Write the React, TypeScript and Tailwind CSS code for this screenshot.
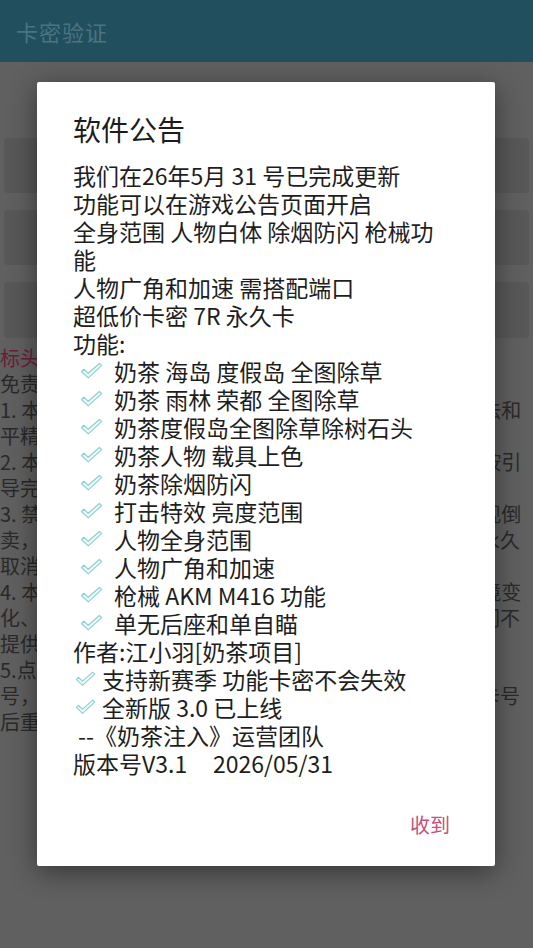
import React from "react";

const FONT = { fontFamily: '"Noto Sans CJK SC", "Noto Sans", sans-serif' };

function Check({ small = false }: { small?: boolean }) {
  return (
    <svg
      viewBox="0 0 24 18"
      className={small ? "w-[21px] h-[16px] shrink-0" : "w-[23px] h-[18px] shrink-0"}
    >
      <path
        d="M1.5 9.5 L4 7.2 L8.6 11.4 L20.2 1.2 L22.6 3.4 L8.6 16.2 Z"
        fill="#eef9f9"
        stroke="#8fd0d2"
        strokeWidth="1.3"
        strokeLinejoin="round"
      />
    </svg>
  );
}

const bgLines: { t: string; red?: boolean }[] = [
  { t: "标头", red: true },
  { t: "免责声明：" },
  { t: "1. 本软件仅供学习与技术交流使用，请勿用于商业、违法和" },
  { t: "平精英等游戏的正常运营。" },
  { t: "2. 本软件需配合端口使用，请在使用前仔细阅读说明并按引" },
  { t: "导完成操作。" },
  { t: "3. 禁止将本软件用于任何形式的二次销售与出租，如发现倒" },
  { t: "卖，我们将立即封禁相关账号与卡密，且不予退款并且永久" },
  { t: "取消使用资格。" },
  { t: "4. 本软件可能会因为游戏版本更新、系统升级或网络环境变" },
  { t: "化、服务器维护等原因而出现功能暂时失效的情况，我们不" },
  { t: "提供任何形式的赔偿。" },
  { t: "5.点击收到后进入验证页面，输入您购买的卡" },
  { t: "号，验证成功后请务必妥善保管好您的卡密以及绑定的卡号" },
  { t: "后重新启动软件即可。" },
];

const items = [
  "奶茶 海岛 度假岛 全图除草",
  "奶茶 雨林 荣都 全图除草",
  "奶茶度假岛全图除草除树石头",
  "奶茶人物 载具上色",
  "奶茶除烟防闪",
  "打击特效 亮度范围",
  "人物全身范围",
  "人物广角和加速",
  "枪械 AKM M416 功能",
  "单无后座和单自瞄",
];

export default function App() {
  return (
    <div className="relative w-[533px] h-[948px] overflow-hidden bg-[#606060]" style={FONT}>
      {/* dimmed page */}
      <div className="h-[62px] bg-[#214f5e] flex items-center px-4">
        <span className="text-[22px] text-[#4c7380] tracking-[1px]">卡密验证</span>
      </div>
      <div className="flex flex-col gap-[17px] px-[4px] pt-[76px]">
        <div className="h-[55px] rounded-[4px] bg-[#585858]" />
        <div className="h-[55px] rounded-[4px] bg-[#585858]" />
        <div className="h-[56px] rounded-[4px] bg-[#585858]" />
      </div>
      <div className="mt-[7px] flex flex-col text-[20px] leading-[26px] text-[#2a2a2a]">
        {bgLines.map((l, i) => (
          <div
            key={i}
            className={
              "whitespace-nowrap overflow-hidden " + (l.red ? "text-[#6a1d36]" : "")
            }
          >
            {l.t}
          </div>
        ))}
      </div>

      {/* dialog */}
      <div className="absolute left-[37px] top-[82px] w-[458px] h-[784px] bg-white rounded-[2px] shadow-[0_6px_28px_rgba(0,0,0,0.45)] flex flex-col pl-[36px] pr-[44px] pt-[29px]">
        <div className="text-[28px] leading-[36px] text-[#1c1c1c]">软件公告</div>
        <div className="mt-[14px] flex flex-col text-[23px] leading-[28px] text-[#1e1e1e]">
          <div>我们在26年5月 31 号已完成更新</div>
          <div>功能可以在游戏公告页面开启</div>
          <div>全身范围 人物白体 除烟防闪 枪械功能</div>
          <div>人物广角和加速 需搭配端口</div>
          <div>超低价卡密 7R 永久卡</div>
          <div>功能:</div>
          {items.map((t, i) => (
            <div key={i} className="flex items-center pl-[7px] gap-[11px]">
              <Check />
              <span>{t}</span>
            </div>
          ))}
          <div>作者:江小羽[奶茶项目]</div>
          <div className="flex items-center pl-[2px] gap-[6px]">
            <Check small />
            <span>支持新赛季 功能卡密不会失效</span>
          </div>
          <div className="flex items-center pl-[2px] gap-[6px]">
            <Check small />
            <span>全新版 3.0 已上线</span>
          </div>
          <div className="pl-[5px]">--《奶茶注入》运营团队</div>
          <div>版本号V3.1&nbsp;&nbsp;&nbsp;&nbsp; 2026/05/31</div>
        </div>
        <div className="flex justify-end pr-[1px] mt-[34px]">
          <span className="text-[20px] leading-[28px] text-[#c4507e]">收到</span>
        </div>
      </div>
    </div>
  );
}
